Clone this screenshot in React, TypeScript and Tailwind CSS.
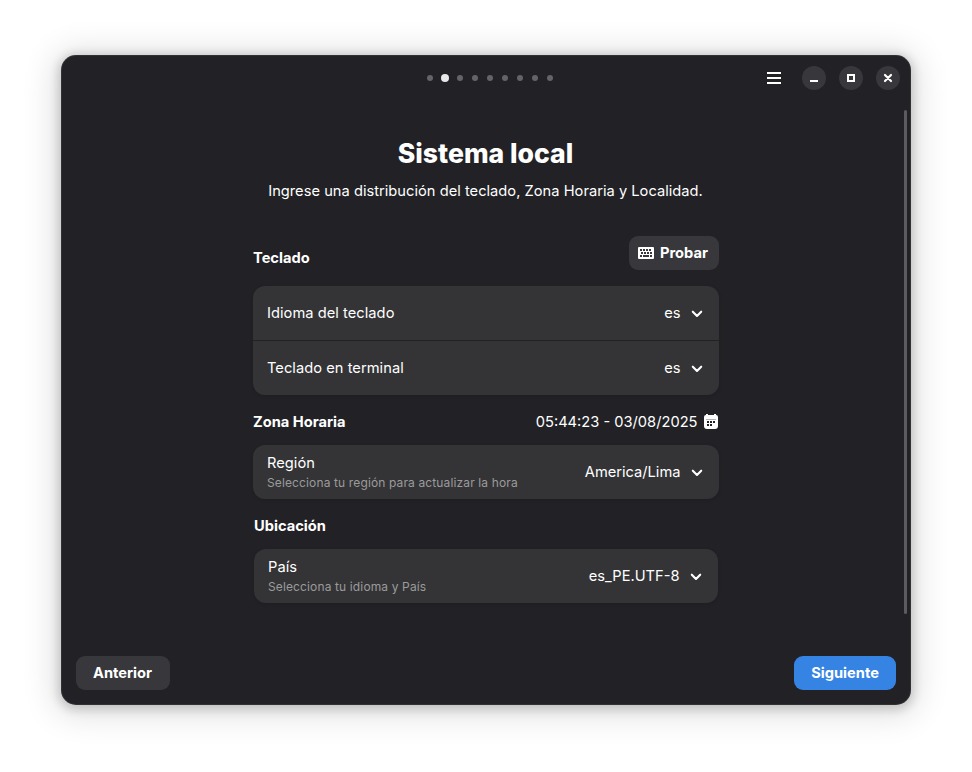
import React from "react";

function Chevron() {
  return (
    <svg width="12" height="8" viewBox="0 0 12 8" className="mt-[2px] mr-[2px] ml-[10.5px] shrink-0" fill="none" stroke="#fff" strokeWidth="2.1" strokeLinecap="round" strokeLinejoin="round">
      <path d="M1.8 1.7 6 5.9l4.2-4.2" />
    </svg>
  );
}

function Row({ title, sub, value }: { title: string; sub?: string; value: string }) {
  return (
    <div className="flex h-[54px] items-center justify-between px-[14px]">
      <div className={sub ? "pt-[2px]" : ""}>
        <div className="text-[14.67px] leading-5 tracking-[0.04px]">{title}</div>
        {sub && <div className="text-[12px] leading-5 tracking-[0.13px] text-[#9b9b9c]">{sub}</div>}
      </div>
      <div className="flex items-center text-[14.67px] leading-5">
        {value}
        <Chevron />
      </div>
    </div>
  );
}

export default function App() {
  return (
    <div className="h-[772px] w-[972px] overflow-hidden bg-white px-[61px] pt-[55px] font-['Inter',sans-serif] text-[14.67px] text-white">
      <div className="flex h-[650px] w-[850px] flex-col rounded-[15px] bg-[#222226] shadow-[0_2px_10px_3px_rgba(0,0,0,0.16),0_3px_32px_8px_rgba(0,0,0,0.12)] ring-1 ring-inset ring-white/7">
        <header className="grid h-[46px] grid-cols-[1fr_auto_1fr] items-center pr-[11px]">
          <span />
          <div className="flex items-center gap-[9px] pl-[18px]">
            {Array.from({ length: 9 }, (_, i) => (
              <span key={i} className={i === 1 ? "-mx-px size-2 rounded-full bg-[#e9e9e9]" : "size-1.5 rounded-full bg-[#646467]"} />
            ))}
          </div>
          <div className="flex items-center justify-end">
            <svg width="16" height="16" className="mr-5" fill="#fff"><path d="M1 2h14v2H1zM1 7h14v2H1zM1 12h14v2H1z" /></svg>
            <div className="flex gap-[13px]">
              <span className="flex size-6 items-center justify-center rounded-full bg-[#38383c]"><svg width="16" height="16" fill="#fff"><path d="M4 10h8v2H4z" /></svg></span>
              <span className="flex size-6 items-center justify-center rounded-full bg-[#38383c]"><svg width="16" height="16" fill="none" stroke="#fff" strokeWidth="2"><path d="M5 5h6v6H5z" /></svg></span>
              <span className="flex size-6 items-center justify-center rounded-full bg-[#38383c]"><svg width="16" height="16" fill="none" stroke="#fff" strokeWidth="2.2" strokeLinecap="round"><path d="m5 5 6 6m0-6-6 6" /></svg></span>
            </div>
          </div>
        </header>
        <div className="flex h-[535px] justify-between">
          <span className="w-[192px]" />
          <main className="w-[466px]">
            <h1 className="mt-[36px] pr-px text-center text-[26.6px] leading-8 font-extrabold">Sistema local</h1>
            <p className="mt-[12px] pr-px text-center leading-5 tracking-[0.02px] whitespace-nowrap">Ingrese una distribución del teclado, Zona Horaria y Localidad.</p>
            <div className="mt-[35px] flex h-[34px] justify-between">
              <h2 className="mt-[12px] leading-5 font-bold">Teclado</h2>
              <button className="flex h-[34px] w-[90px] items-center rounded-[9px] bg-[#38383c] pl-[9px] font-bold">
                <svg width="16" height="12" className="mr-[6px]" viewBox="0 0 16 12"><path fill="#fff" d="M1 0h14a1 1 0 0 1 1 1v10a1 1 0 0 1-1 1H1a1 1 0 0 1-1-1V1a1 1 0 0 1 1-1z" /><path fill="#38383c" d="M2 2h2v2H2zM5 2h2v2H5zM8 2h2v2H8zM11 2h2v2h-2zM3 5h2v2H3zM6 5h2v2H6zM9 5h2v2H9zM12 5h2v2h-2zM2 8h2v2H2zM5 8h6v2H5zM12 8h2v2h-2z" /></svg>
                Probar
              </button>
            </div>
            <section className="mt-4 rounded-xl bg-[#343436] shadow-[0_1px_3px_1px_rgba(0,0,0,0.08)]">
              <Row title="Idioma del teclado" value="es" />
              <div className="h-px bg-[#222226]" />
              <Row title="Teclado en terminal" value="es" />
            </section>
            <div className="mt-[17px] flex h-5 items-center justify-between">
              <h2 className="font-bold">Zona Horaria</h2>
              <div className="flex items-center">05:44:23 - 03/08/2025
                <svg width="16" height="16" className="ml-[5.5px]" viewBox="0 0 16 16">
                  <path fill="#fff" d="M3 0h2v1h6V0h2v1a2 2 0 0 1 2 2v9a3 3 0 0 1-3 3H4a3 3 0 0 1-3-3V3a2 2 0 0 1 2-2z" />
                  <path fill="#222226" d="M4 7h2v2H4zM7 7h2v2H7zM10 7h2v2h-2zM4 10h2v2H4zM7 10h2v2H7z" />
                  <path fill="none" stroke="#222226" strokeOpacity=".35" d="M3 5.5h10" />
                </svg>
              </div>
            </div>
            <section className="mt-[13px] rounded-xl bg-[#343436] shadow-[0_1px_3px_1px_rgba(0,0,0,0.08)]"><Row title="Región" sub="Selecciona tu región para actualizar la hora" value="America/Lima" /></section>
            <div className="px-px">
              <h2 className="mt-[17px] leading-5 font-bold">Ubicación</h2>
              <section className="mt-[13px] rounded-xl bg-[#343436] shadow-[0_1px_3px_1px_rgba(0,0,0,0.08)]"><Row title="País" sub="Selecciona tu idioma y País" value="es_PE.UTF-8" /></section>
            </div>
          </main>
          <div className="flex w-[192px] justify-end pt-[9px] pr-[4px]"><span className="h-[504px] w-[3px] rounded-full bg-[#5c5c5f]" /></div>
        </div>
        <footer className="flex justify-between px-[15px] pt-5 font-bold">
          <button className="h-[34px] w-[94px] rounded-[9px] bg-[#38383c] pr-px">Anterior</button>
          <button className="h-[34px] w-[102px] rounded-[9px] bg-[#3584e4]">Siguiente</button>
        </footer>
      </div>
    </div>
  );
}
